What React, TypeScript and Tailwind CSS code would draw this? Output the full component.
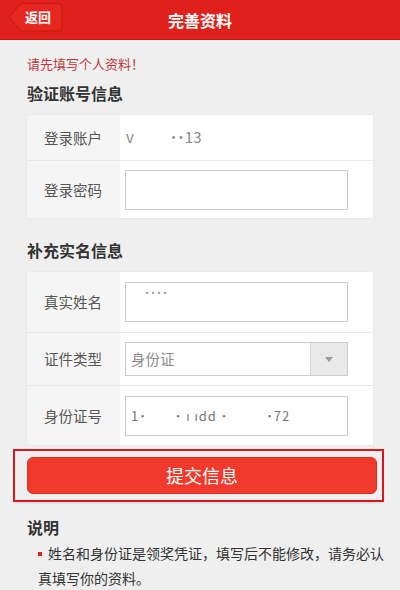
import React from "react";

const font = { fontFamily: '"Noto Sans CJK SC", "Noto Sans", sans-serif' };

function Row({ label, children, h, border = true }: { label: string; children: React.ReactNode; h: string; border?: boolean }) {
  return (
    <div className={`flex ${h} ${border ? "border-b border-[#e8e8e8]" : ""}`}>
      <div className="w-[93px] shrink-0 bg-[#f5f5f5] flex items-center pl-[17px] text-[14.5px] text-[#555]">{label}</div>
      <div className="flex-1 bg-white flex items-center pl-[5px]">{children}</div>
    </div>
  );
}

export default function App() {
  return (
    <div className="w-[400px] h-[590px] bg-[#efefef] overflow-hidden" style={font}>
      {/* header */}
      <div className="h-[40px] bg-[#e0201a] relative flex items-center justify-center border-b border-[#c81812]">
        <div className="absolute left-[8px] top-[2px] w-[55px] h-[30px]">
          <svg width="55" height="30" viewBox="0 0 55 30" className="absolute inset-0">
            <path d="M1 15 L13 1.5 L50 1.5 Q54 1.5 54 5.5 L54 25 Q54 29 50 29 L13 29 Z" fill="#e5281f" stroke="#c71811" strokeWidth="1" />
          </svg>
          <span className="absolute left-[17px] top-[6px] text-[13px] leading-[18px] text-white font-bold">返回</span>
        </div>
        <span className="text-white text-[16px] font-bold">完善资料</span>
      </div>

      <div className="px-[27px]">
        <div className="mt-[14px] h-[20px] leading-[20px] text-[13px] text-[#c3383c]">请先填写个人资料！</div>
        <div className="mt-[7px] h-[24px] leading-[24px] text-[16px] font-bold text-[#333]">验证账号信息</div>

        <div className="mt-[10px] shadow-[0_0_1px_rgba(0,0,0,0.12)]">
          <Row label="登录账户" h="h-[46px]">
            <span className="text-[15px] text-[#888] pl-[1px]">v</span>
            <span className="text-[15px] text-[#888] ml-[36px]">˙˙13</span>
          </Row>
          <Row label="登录密码" h="h-[57px]" border={false}>
            <div className="w-[223px] h-[40px] border border-[#cccccc] bg-white" />
          </Row>
        </div>

        <div className="mt-[20px] h-[24px] leading-[24px] text-[16px] font-bold text-[#333]">补充实名信息</div>

        <div className="mt-[10px] shadow-[0_0_1px_rgba(0,0,0,0.12)]">
          <Row label="真实姓名" h="h-[61px]">
            <div className="w-[223px] h-[40px] border border-[#cccccc] bg-white pl-[18px] pt-[4px] text-[12px] text-[#999] leading-[12px]">˙˙˙˙</div>
          </Row>
          <Row label="证件类型" h="h-[53px]">
            <div className="w-[223px] h-[34px] border border-[#cccccc] bg-white flex">
              <div className="flex-1 flex items-center pl-[5px] text-[14.5px] text-[#8a8a8a]">身份证</div>
              <div className="w-[37px] bg-[#e9e9e9] border-l border-[#d4d4d4] flex items-center justify-center">
                <svg width="8" height="5" viewBox="0 0 8 5"><path d="M0 0 L8 0 L4 5 Z" fill="#9a9a9a" /></svg>
              </div>
            </div>
          </Row>
          <Row label="身份证号" h="h-[59px]" border={false}>
            <div className="w-[223px] h-[40px] border border-[#cccccc] bg-white flex items-center pl-[5px] text-[13px] text-[#777] tracking-[1px]">
              <span>1˙</span><span className="ml-[28px]">˙ ı ıdd ˙</span><span className="ml-[38px]">˙72</span>
            </div>
          </Row>
        </div>
      </div>

      {/* submit button with highlight */}
      <div className="ml-[13px] mr-[16px] mt-[4px] border-2 border-[#e0141c] pl-[12px] pr-[5px] py-[6px]">
        <div className="h-[37px] rounded-[6px] bg-[#f23a2c] border border-[#e12c20] flex items-center justify-center text-white text-[18px]">提交信息</div>
      </div>
      <div className="ml-[16px] mr-[18px] h-[2px] bg-[#e4e4e4]" />

      <div className="px-[27px]">
        <div className="mt-[11px] h-[24px] leading-[24px] text-[16px] font-bold text-[#333]">说明</div>
      </div>
      <div className="pl-[38px] pr-[10px] mt-[2px] text-[14px] leading-[25px] text-[#333]">
        <span className="inline-block w-[4px] h-[4px] bg-[#e0201a] align-middle mr-[6px] mb-[2px]" />
        姓名和身份证是领奖凭证，填写后不能修改，请务必认真填写你的资料。
      </div>
    </div>
  );
}
